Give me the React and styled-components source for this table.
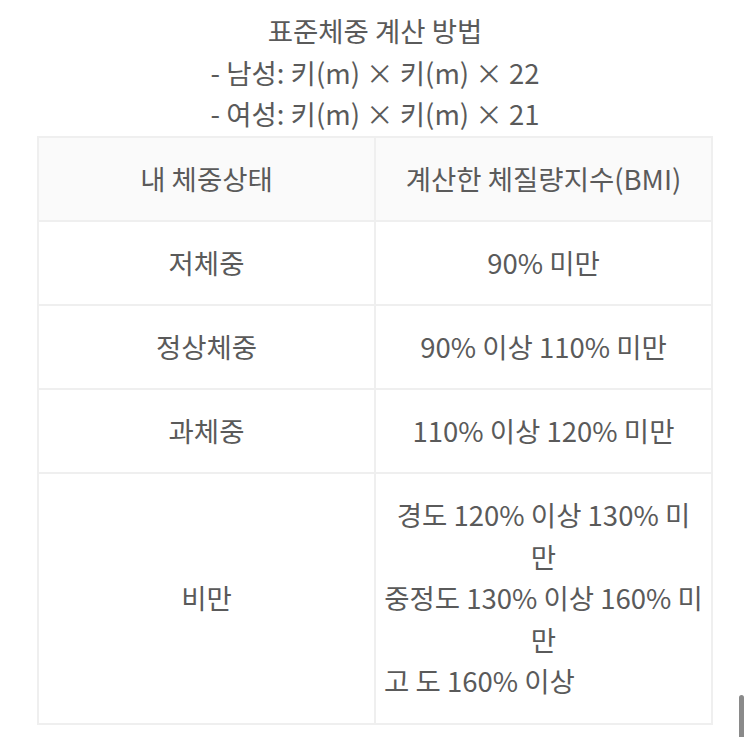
import styled, { createGlobalStyle } from 'styled-components';

const GlobalStyle = createGlobalStyle`
  html, body {
    margin: 0;
    padding: 0;
    background: #ffffff;
  }
  body {
    font-family: "Noto Sans CJK KR", "Noto Sans", sans-serif;
    color: #5a5a5a;
  }
`;

const Page = styled.div`
  width: 750px;
  height: 737px;
  overflow: hidden;
  position: relative;
  padding-top: 10px;
  box-sizing: border-box;
`;

const Intro = styled.p`
  margin: 0 0 1px;
  text-align: center;
  font-size: 27.5px;
  line-height: 41.5px;
`;

const Table = styled.table`
  width: 676px;
  margin: 0 auto;
  border-collapse: collapse;
  table-layout: fixed;
  font-size: 27.5px;
`;

const HeadCell = styled.th`
  width: 50%;
  height: 82px;
  background: #fafafa;
  border: 2px solid #efefef;
  font-weight: 400;
  line-height: 41.5px;
  padding: 0 8px;
  text-align: center;
`;

const Cell = styled.td`
  height: ${({ tall }) => (tall ? '249px' : '82px')};
  border: 2px solid #efefef;
  line-height: 41.5px;
  padding: 0 8px;
  text-align: center;
  vertical-align: middle;
`;

const Line = styled.div`
  text-align: ${({ left }) => (left ? 'left' : 'center')};
  white-space: nowrap;
`;

const ScrollThumb = styled.div`
  position: absolute;
  right: 6px;
  top: 695px;
  width: 5px;
  height: 50px;
  border-radius: 3px;
  background: #8a8a8a;
`;

const rows = [
  ['저체중', '90% 미만'],
  ['정상체중', '90% 이상 110% 미만'],
  ['과체중', '110% 이상 120% 미만'],
];

export default function App() {
  return (
    <Page>
      <GlobalStyle />
      <Intro>
        표준체중 계산 방법
        <br />- 남성: 키(m) × 키(m) × 22
        <br />- 여성: 키(m) × 키(m) × 21
      </Intro>
      <Table>
        <thead>
          <tr>
            <HeadCell>내 체중상태</HeadCell>
            <HeadCell>계산한 체질량지수(BMI)</HeadCell>
          </tr>
        </thead>
        <tbody>
          {rows.map(([state, range]) => (
            <tr key={state}>
              <Cell>{state}</Cell>
              <Cell>{range}</Cell>
            </tr>
          ))}
          <tr>
            <Cell tall>비만</Cell>
            <Cell tall>
              <Line>경도 120% 이상 130% 미</Line>
              <Line>만</Line>
              <Line>중정도 130% 이상 160% 미</Line>
              <Line>만</Line>
              <Line left>고 도 160% 이상</Line>
            </Cell>
          </tr>
        </tbody>
      </Table>
      <ScrollThumb />
    </Page>
  );
}
